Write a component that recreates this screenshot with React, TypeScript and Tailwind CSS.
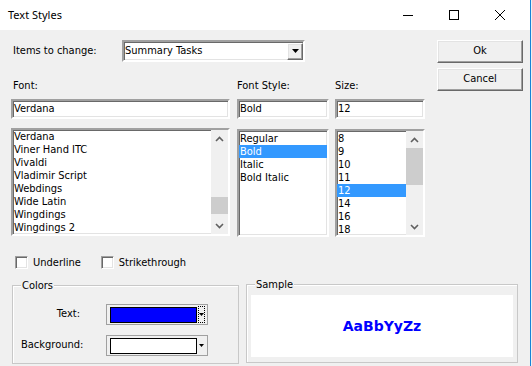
import React from "react";

const FONT = { fontFamily: '"DejaVu Sans Condensed", "DejaVu Sans", sans-serif', fontSize: "11px" };

const sunken =
  "border-2 border-t-[#a0a0a0] border-l-[#a0a0a0] border-b-white border-r-white shadow-[inset_1px_1px_0_#696969,inset_-1px_-1px_0_#e3e3e3]";
const raised =
  "border border-t-white border-l-white border-b-[#696969] border-r-[#696969] shadow-[inset_-1px_-1px_0_#a0a0a0,inset_1px_1px_0_#e3e3e3]";

function ChevUp() {
  return (
    <svg width="9" height="6" viewBox="0 0 9 6">
      <path d="M1 5 L4.5 1.5 L8 5" stroke="#606060" strokeWidth="1.6" fill="none" />
    </svg>
  );
}
function ChevDown() {
  return (
    <svg width="9" height="6" viewBox="0 0 9 6">
      <path d="M1 1 L4.5 4.5 L8 1" stroke="#606060" strokeWidth="1.6" fill="none" />
    </svg>
  );
}

function Scrollbar({ thumbTop, thumbH }: { thumbTop: number; thumbH: number }) {
  return (
    <div className="w-[17px] h-full bg-[#f0f0f0] flex flex-col relative">
      <div className="h-[17px] flex items-center justify-center">
        <ChevUp />
      </div>
      <div className="flex-1 relative">
        <div className="absolute left-0 right-0 bg-[#cdcdcd]" style={{ top: thumbTop, height: thumbH }} />
      </div>
      <div className="h-[17px] flex items-center justify-center">
        <ChevDown />
      </div>
    </div>
  );
}

function ListBox({
  items,
  selected,
  width,
  scroll,
  padTop,
}: {
  items: string[];
  selected?: number;
  width: number;
  scroll?: { top: number; h: number };
  padTop: number;
}) {
  return (
    <div className={`${sunken} bg-white h-[108px] flex overflow-hidden`} style={{ width }}>
      <div className="flex-1 flex flex-col" style={{ paddingTop: padTop }}>
        {items.map((it, i) => (
          <div
            key={it}
            className={`h-[13px] leading-[13px] pl-[1px] whitespace-nowrap ${
              i === selected ? "bg-[#3399ff] text-white" : "text-black"
            }`}
          >
            {it}
          </div>
        ))}
      </div>
      {scroll && <Scrollbar thumbTop={scroll.top} thumbH={scroll.h} />}
    </div>
  );
}

function Checkbox({ label }: { label: string }) {
  return (
    <div className="flex items-center h-[13px]">
      <div className="w-[13px] h-[13px] bg-white border border-t-[#a0a0a0] border-l-[#a0a0a0] border-b-white border-r-white shadow-[inset_1px_1px_0_#696969,inset_-1px_-1px_0_#e3e3e3]" />
      <span className="ml-[5px] leading-[13px]">{label}</span>
    </div>
  );
}

function ColorCombo({ color, focus }: { color: string; focus?: boolean }) {
  return (
    <div className="w-[102px] h-[21px] border border-[#a0a0a0] bg-[#f0f0f0] flex items-center pl-[3px] pr-[2px]">
      <div className="w-[87px] h-[16px] border border-black" style={{ background: color }} />
      <div
        className={`flex-1 h-[17px] ml-[1px] flex items-center justify-center ${
          focus ? "border border-dotted border-black" : ""
        }`}
      >
        <svg width="5" height="3" viewBox="0 0 5 3">
          <path d="M0 0 H5 L2.5 3 Z" fill="#000" />
        </svg>
      </div>
    </div>
  );
}

function Button({ label }: { label: string }) {
  return (
    <div className={`w-[86px] h-[23px] ${raised} bg-[#f0f0f0] flex items-center justify-center`}>{label}</div>
  );
}

export default function App() {
  return (
    <div className="w-[532px] h-[366px] flex overflow-hidden" style={FONT}>
      <div className="w-[530px] h-full flex flex-col">
        {/* Title bar */}
        <div className="h-[30px] bg-white flex items-center shrink-0">
          <span
            className="ml-[8px] text-black"
            style={{ fontFamily: '"Noto Sans", sans-serif', fontSize: "11px" }}
          >
            Text Styles
          </span>
          <div className="ml-auto flex h-full">
            <div className="w-[46px] flex items-center justify-center">
              <svg width="10" height="10" viewBox="0 0 10 10">
                <path d="M0 5.5 H10" stroke="#000" strokeWidth="1" />
              </svg>
            </div>
            <div className="w-[46px] flex items-center justify-center">
              <svg width="10" height="10" viewBox="0 0 10 10">
                <rect x="0.5" y="0.5" width="9" height="9" stroke="#000" strokeWidth="1" fill="none" />
              </svg>
            </div>
            <div className="w-[46px] flex items-center justify-center">
              <svg width="10" height="10" viewBox="0 0 10 10">
                <path d="M0 0 L10 10 M10 0 L0 10" stroke="#000" strokeWidth="1" />
              </svg>
            </div>
            <div className="w-[7px]" />
          </div>
        </div>

        {/* Body */}
        <div className="flex-1 bg-[#f0f0f0] flex flex-col text-black">
          <div className="flex">
            <div className="w-[414px] ml-[11px] flex flex-col">
              <div className="mt-[10px] h-[22px] flex items-center">
                <span className="w-[111px] pl-[2px]">Items to change:</span>
                <div className={`w-[183px] h-[22px] ${sunken} bg-white flex items-center`}>
                  <span className="pl-[1px] flex-1">Summary Tasks</span>
                  <div className={`w-[16px] h-[17px] ${raised} bg-[#f0f0f0] flex items-center justify-center`}>
                    <svg width="7" height="4" viewBox="0 0 7 4">
                      <path d="M0 0 H7 L3.5 4 Z" fill="#000" />
                    </svg>
                  </div>
                </div>
              </div>

              <div className="mt-[17px] h-[13px] flex leading-[13px]">
                <span className="w-[226px] pl-[2px]">Font:</span>
                <span className="w-[98px]">Font Style:</span>
                <span>Size:</span>
              </div>

              <div className="mt-[7px] flex">
                <div className={`w-[219px] h-[20px] ${sunken} bg-white flex items-center pl-[1px]`}>Verdana</div>
                <div className={`ml-[7px] w-[92px] h-[20px] ${sunken} bg-white flex items-center pl-[1px]`}>Bold</div>
                <div className={`ml-[6px] w-[90px] h-[20px] ${sunken} bg-white flex items-center pl-[1px]`}>12</div>
              </div>

              <div className="mt-[9px] h-[109px] flex items-start">
                <ListBox
                  width={219}
                  padTop={0}
                  items={[
                    "Verdana",
                    "Viner Hand ITC",
                    "Vivaldi",
                    "Vladimir Script",
                    "Webdings",
                    "Wide Latin",
                    "Wingdings",
                    "Wingdings 2",
                  ]}
                  scroll={{ top: 50, h: 17 }}
                />
                <div className="ml-[7px] mt-[1px]">
                  <ListBox width={92} padTop={1} selected={1} items={["Regular", "Bold", "Italic", "Bold Italic"]} />
                </div>
                <div className="ml-[6px] mt-[1px]">
                  <ListBox
                    width={90}
                    padTop={1}
                    selected={4}
                    items={["8", "9", "10", "11", "12", "14", "16", "18"]}
                    scroll={{ top: 0, h: 37 }}
                  />
                </div>
              </div>

              <div className="mt-[19px] h-[13px] flex pl-[4px]">
                <Checkbox label="Underline" />
                <div className="ml-[20px]">
                  <Checkbox label="Strikethrough" />
                </div>
              </div>
            </div>

            <div className="ml-[12px] mt-[10px] flex flex-col gap-[5px]">
              <Button label="Ok" />
              <Button label="Cancel" />
            </div>
          </div>

          <div className="flex mt-[15px] ml-[12px] items-start">
            {/* Colors group */}
            <div className="relative mt-[1px] w-[227px] h-[79px] border border-[#c8c8c8] shadow-[inset_1px_1px_0_white]">
              <span className="absolute -top-[7px] left-[8px] px-[1px] bg-[#f0f0f0] leading-[13px]">Colors</span>
              <div className="mt-[18px] grid grid-cols-[93px_102px] items-center gap-y-[10px]">
                <span className="text-right pr-[26px]">Text:</span>
                <ColorCombo color="#0000ff" focus />
                <span className="pl-[8px]">Background:</span>
                <ColorCombo color="#ffffff" />
              </div>
            </div>
            {/* Sample group */}
            <div className="relative ml-[7px] w-[272px] h-[79px] border border-[#c8c8c8] shadow-[inset_1px_1px_0_white] px-[4px] pt-[10px]">
              <span className="absolute -top-[7px] left-[8px] px-[1px] bg-[#f0f0f0] leading-[13px]">Sample</span>
              <div className="h-[62px] bg-white flex items-center justify-center">
                <span
                  className="text-[#0000ff] font-bold"
                  style={{ fontFamily: '"DejaVu Sans", Verdana, sans-serif', fontSize: "14px" }}
                >
                  AaBbYyZz
                </span>
              </div>
            </div>
          </div>
        </div>
      </div>
      <div className="w-[1px] h-full bg-[#1883d7]" />
      <div className="w-[1px] h-full bg-[#f0f0f0]" />
    </div>
  );
}
